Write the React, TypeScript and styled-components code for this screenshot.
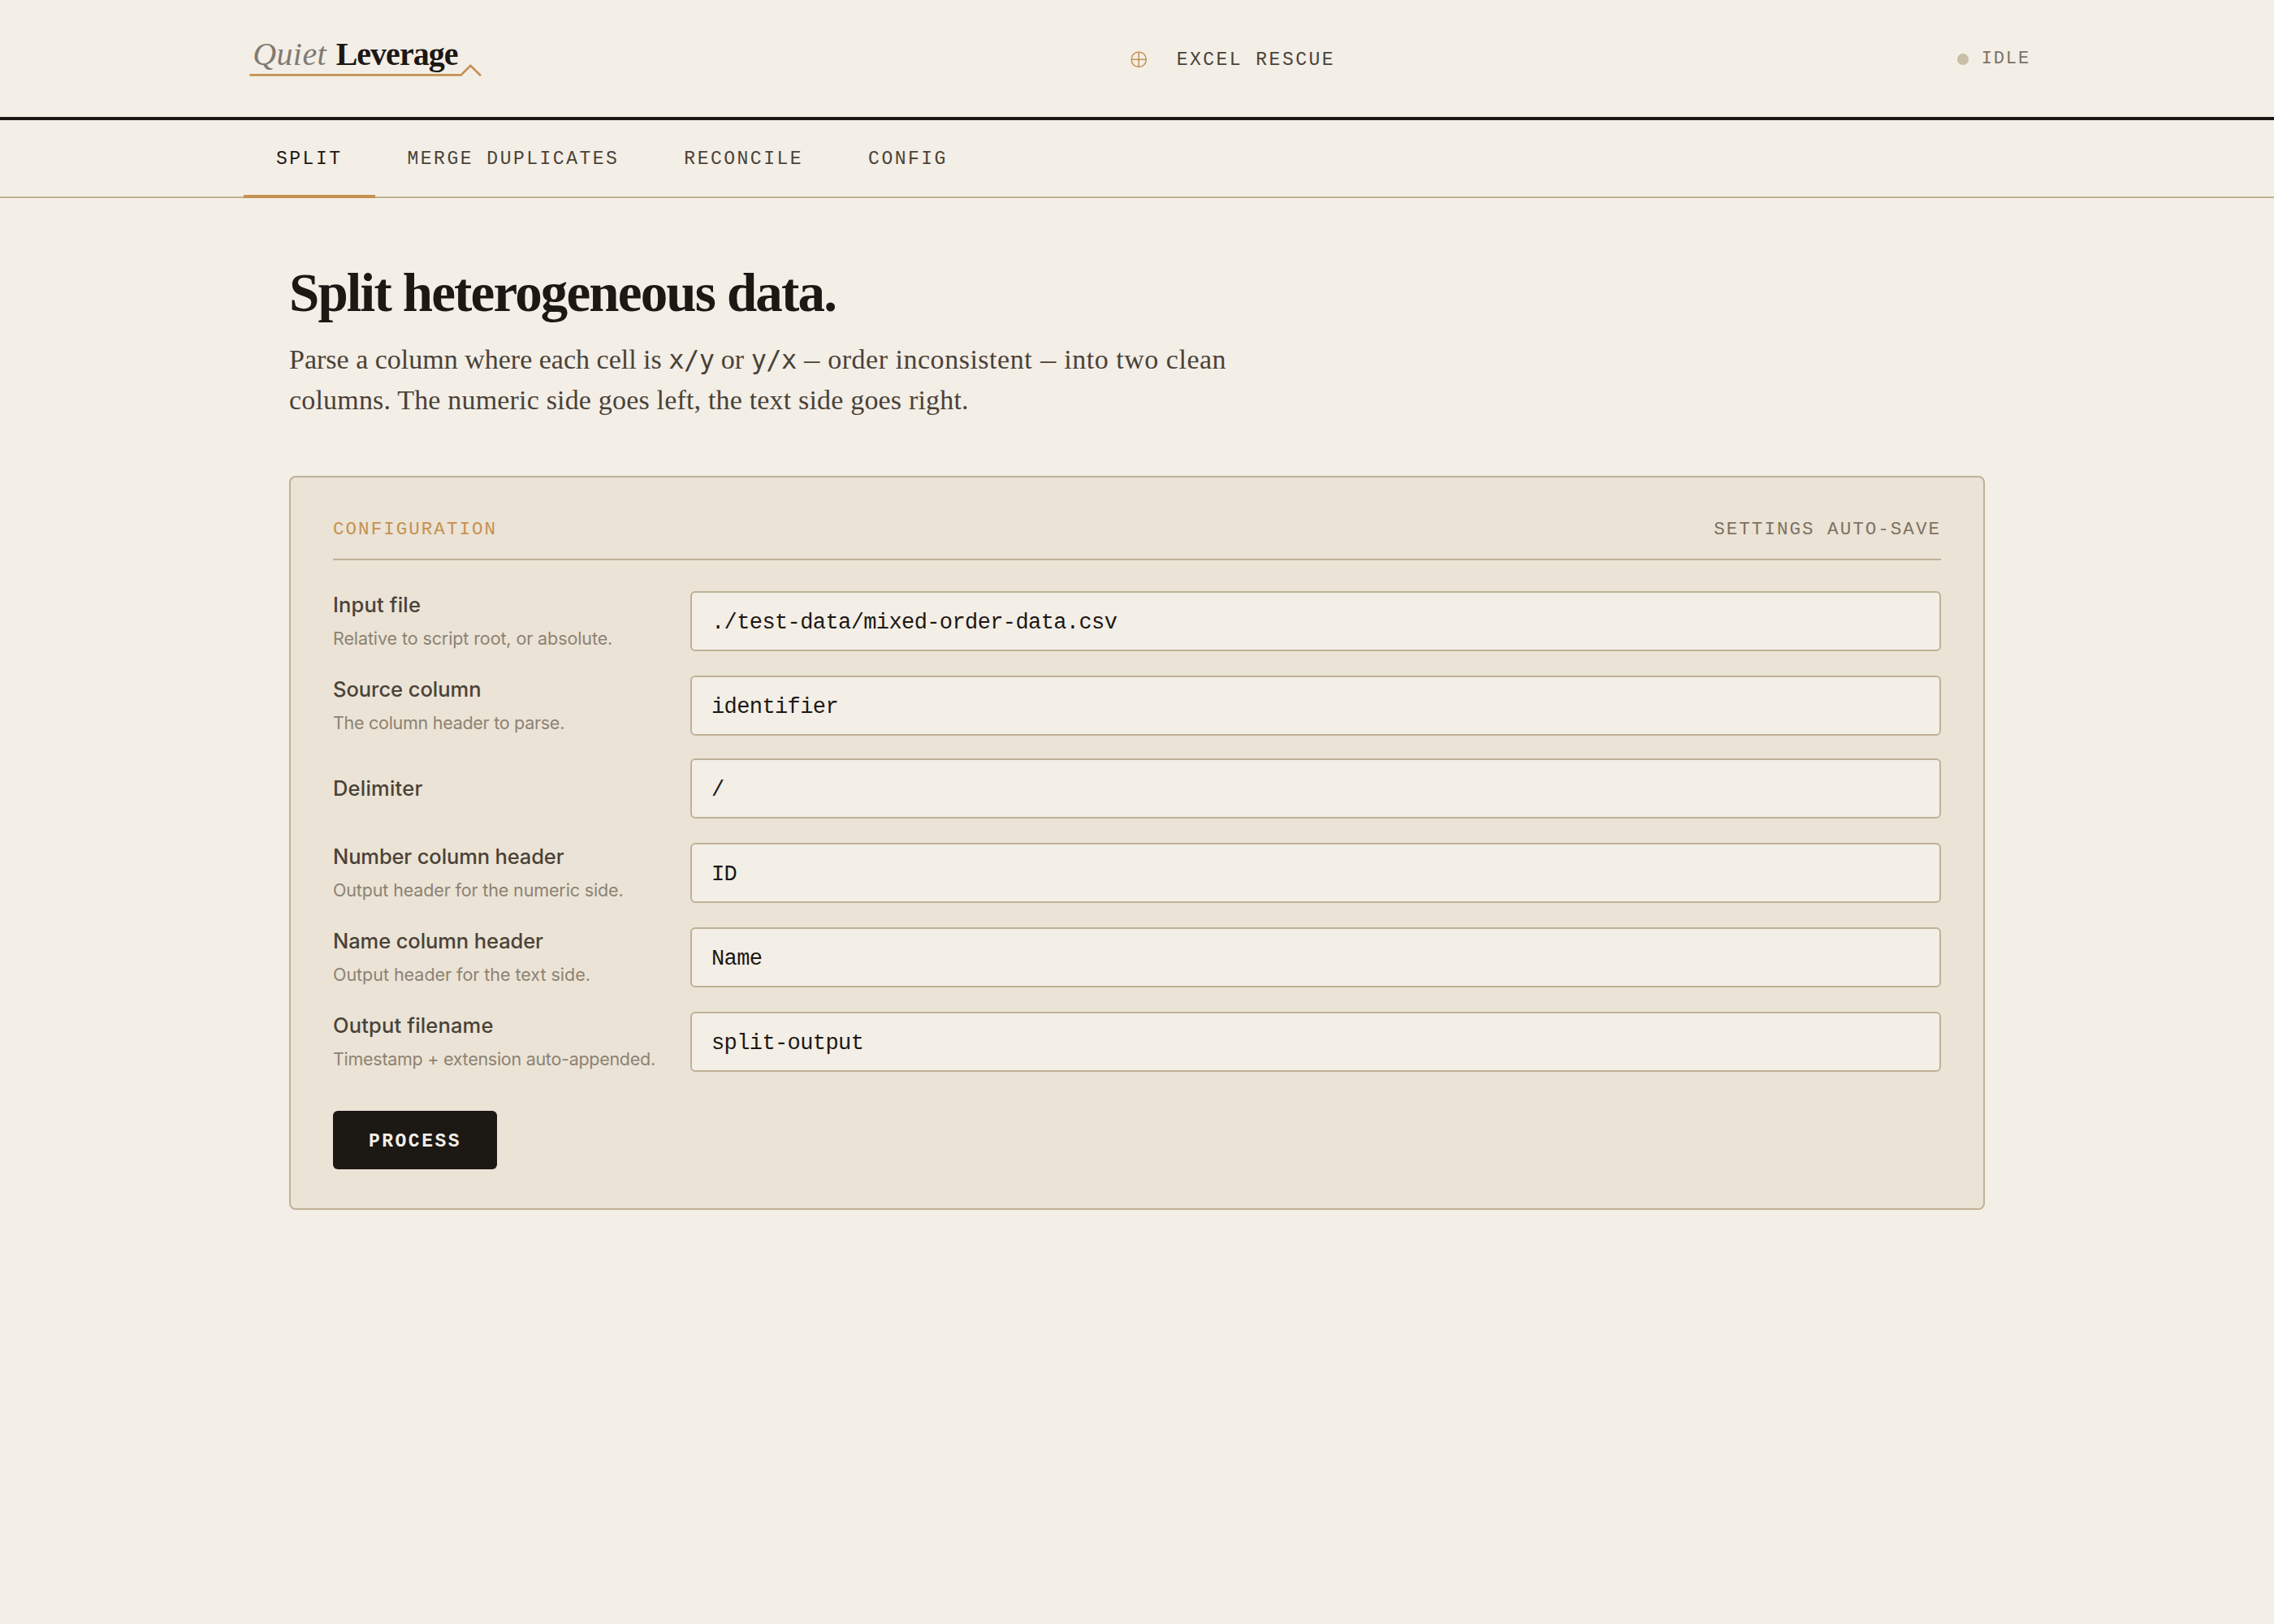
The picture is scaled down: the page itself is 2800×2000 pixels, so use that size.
import React, { useState } from "react";
import styled, { createGlobalStyle } from "styled-components";

const color = {
  paper: "#f3eee6",
  panel: "#ebe3d5",
  ink: "#1c1814",
  soft: "#4a4238",
  muted: "#7c7264",
  hint: "#8c8274",
  rule: "#beb197",
  accent: "#c49152",
  idle: "#c9bea6",
};

const serif = '"Liberation Serif", "Times New Roman", serif';
const sans = 'Inter, "Liberation Sans", sans-serif';
const mono = '"Liberation Mono", "Courier New", monospace';

const GlobalStyle = createGlobalStyle`
  *, *::before, *::after { box-sizing: border-box; }
  body {
    margin: 0;
    min-height: 100vh;
    background: ${color.paper};
    color: ${color.ink};
    font-family: ${sans};
  }
`;

const Header = styled.header`
  border-bottom: 4px solid ${color.ink};
`;

const HeaderInner = styled.div`
  display: flex;
  align-items: center;
  justify-content: space-between;
  width: 2200px;
  height: 144px;
  margin: 0 auto;
`;

const Logo = styled.svg`
  display: block;
  width: 326px;
  height: 144px;
`;

const LogoQuiet = styled.text`
  font: italic 400 40px ${serif};
  letter-spacing: 0.4px;
  fill: #7f7a72;
`;

const LogoLeverage = styled.text`
  font: 700 40px ${serif};
  letter-spacing: -1px;
  fill: ${color.ink};
`;

const ToolName = styled.div`
  display: flex;
  align-items: center;
  gap: 37px;
  padding-top: 4px;
  color: ${color.soft};
  font: 400 23px/30px ${mono};
  letter-spacing: 2.48px;
`;

const ToolMark = styled.svg`
  display: block;
  width: 20px;
  height: 22px;
`;

const Status = styled.div`
  display: flex;
  align-items: center;
  gap: 16px;
  padding-top: 1px;
  color: ${color.muted};
  font: 400 22px/30px ${mono};
  letter-spacing: 1.88px;
`;

const StatusDot = styled.span`
  width: 14px;
  height: 14px;
  margin-top: 1px;
  border-radius: 50%;
  background: ${color.idle};
`;

const Nav = styled.nav`
  height: 96px;
  border-bottom: 2px solid ${color.rule};
`;

const TabList = styled.div`
  display: flex;
  width: 2200px;
  height: 96px;
  margin: 0 auto;
`;

const Tab = styled.button<{ $active: boolean }>`
  height: 96px;
  padding: 3px 40px 0;
  border: 0;
  border-bottom: 4px solid ${(p) => (p.$active ? color.accent : "transparent")};
  background: none;
  color: ${(p) => (p.$active ? color.ink : color.soft)};
  font: 400 23px/30px ${mono};
  letter-spacing: 2.5px;
  white-space: nowrap;
`;

const Main = styled.main`
  width: 2088px;
  margin: 0 auto;
  padding-top: 80px;
`;

const Title = styled.h1`
  margin: 0 0 22px;
  font: 700 67px/72px ${serif};
  letter-spacing: -1.84px;
`;

const Lede = styled.p`
  margin: 0 0 68px;
  color: ${color.soft};
  font: 400 34px/50px ${serif};
`;

const LedeLine = styled.span<{ $tracking?: number }>`
  display: block;
  height: 50px;
  letter-spacing: ${(p) => p.$tracking ?? 0}px;
  white-space: nowrap;
`;

const Tracked = styled.span`
  letter-spacing: 0.52px;
`;

const Code = styled.code`
  font: 400 32px/1 "DejaVu Sans Mono", monospace;
  letter-spacing: -0.6px;
`;

const Dash = styled.span`
  display: inline-block;
  width: 21px;
  line-height: 1;
  letter-spacing: 0;
  transform: translateX(1px) scaleX(0.57);
  transform-origin: 0 50%;
`;

const Panel = styled.section`
  padding: 48px 52px;
  border: 2px solid ${color.rule};
  border-radius: 8px;
  background: ${color.panel};
`;

const PanelHead = styled.div`
  display: flex;
  justify-content: space-between;
  padding-bottom: 20px;
  border-bottom: 2px solid ${color.rule};
  color: ${color.muted};
  font: 400 22.5px/32px ${mono};
  letter-spacing: 2.04px;
`;

const PanelTitle = styled.span`
  color: ${color.accent};
`;

const Fields = styled.div`
  display: flex;
  flex-direction: column;
  gap: 28px;
  padding: 36px 0 48px;
`;

const Field = styled.label`
  display: grid;
  grid-template-columns: 400px 1fr;
  column-gap: 40px;
  align-items: end;
`;

const Caption = styled.span`
  display: flex;
  flex-direction: column;
  gap: 6px;
  align-self: center;
`;

const Label = styled.span<{ $tracking: number }>`
  color: ${color.soft};
  font: 500 25.5px/38px ${sans};
  letter-spacing: ${(p) => p.$tracking}px;
  white-space: nowrap;
`;

const Hint = styled.span<{ $tracking: number }>`
  color: ${color.hint};
  font: 400 21.5px/32px ${sans};
  letter-spacing: ${(p) => p.$tracking}px;
  white-space: nowrap;
`;

const Input = styled.input`
  display: block;
  width: 100%;
  height: 74px;
  margin: 0;
  padding: 3px 24px 0;
  border: 2px solid ${color.rule};
  border-radius: 6px;
  outline: 0;
  background: ${color.paper};
  color: ${color.ink};
  font: 400 27px/32px ${mono};
  letter-spacing: -0.6px;
`;

const ProcessButton = styled.button`
  display: block;
  width: 202px;
  height: 72px;
  padding: 3px 0 0;
  border: 0;
  border-radius: 6px;
  background: ${color.ink};
  color: ${color.paper};
  font: 700 23px/30px ${mono};
  letter-spacing: 2.48px;
`;

const tabs = ["SPLIT", "MERGE DUPLICATES", "RECONCILE", "CONFIG"];

const fields = [
  { label: "Input file", labelTracking: 0.16, hint: "Relative to script root, or absolute.", hintTracking: -0.1, value: "./test-data/mixed-order-data.csv" },
  { label: "Source column", labelTracking: -0.04, hint: "The column header to parse.", hintTracking: -0.28, value: "identifier" },
  { label: "Delimiter", labelTracking: 0.22, value: "/" },
  { label: "Number column header", labelTracking: -0.13, hint: "Output header for the numeric side.", hintTracking: -0.14, value: "ID" },
  { label: "Name column header", labelTracking: -0.09, hint: "Output header for the text side.", hintTracking: -0.03, value: "Name" },
  { label: "Output filename", labelTracking: 0.16, hint: "Timestamp + extension auto-appended.", hintTracking: -0.28, value: "split-output" },
];

export default function App() {
  const [active, setActive] = useState("SPLIT");

  return (
    <>
      <GlobalStyle />
      <Header>
        <HeaderInner>
          <Logo viewBox="0 0 326 144">
            <LogoQuiet x="11.2" y="79.8">Quiet</LogoQuiet>
            <LogoLeverage x="113.7" y="79.8">Leverage</LogoLeverage>
            <polyline
              points="7.3,92.4 267.7,92.4 279.3,80.8 292,93.2"
              fill="none"
              stroke={color.accent}
              strokeWidth="2.6"
            />
          </Logo>
          <ToolName>
            <ToolMark viewBox="0 0 20 22" fill="none" stroke={color.accent} strokeWidth="1.5">
              <rect x="1.3" y="1.3" width="17.8" height="18" rx="8" ry="8.4" />
              <path d="M10.2 1.3V19.3M1.3 10.3H19.1" />
            </ToolMark>
            EXCEL RESCUE
          </ToolName>
          <Status>
            <StatusDot />
            IDLE
          </Status>
        </HeaderInner>
      </Header>
      <Nav>
        <TabList>
          {tabs.map((name) => (
            <Tab key={name} $active={name === active} onClick={() => setActive(name)}>
              {name}
            </Tab>
          ))}
        </TabList>
      </Nav>
      <Main>
        <Title>Split heterogeneous data.</Title>
        <Lede>
          <LedeLine>
            Parse a column where each cell is <Code>x/y</Code> or <Code>y/x</Code>{" "}
            <Tracked>
              <Dash>—</Dash> order inconsistent <Dash>—</Dash> into two clean
            </Tracked>
          </LedeLine>
          <LedeLine $tracking={0.18}>columns. The numeric side goes left, the text side goes right.</LedeLine>
        </Lede>
        <Panel>
          <PanelHead>
            <PanelTitle>CONFIGURATION</PanelTitle>
            <span>SETTINGS AUTO-SAVE</span>
          </PanelHead>
          <Fields>
            {fields.map((f) => (
              <Field key={f.label}>
                <Caption>
                  <Label $tracking={f.labelTracking}>{f.label}</Label>
                  {f.hint && <Hint $tracking={f.hintTracking ?? 0}>{f.hint}</Hint>}
                </Caption>
                <Input defaultValue={f.value} spellCheck={false} />
              </Field>
            ))}
          </Fields>
          <ProcessButton>PROCESS</ProcessButton>
        </Panel>
      </Main>
    </>
  );
}
